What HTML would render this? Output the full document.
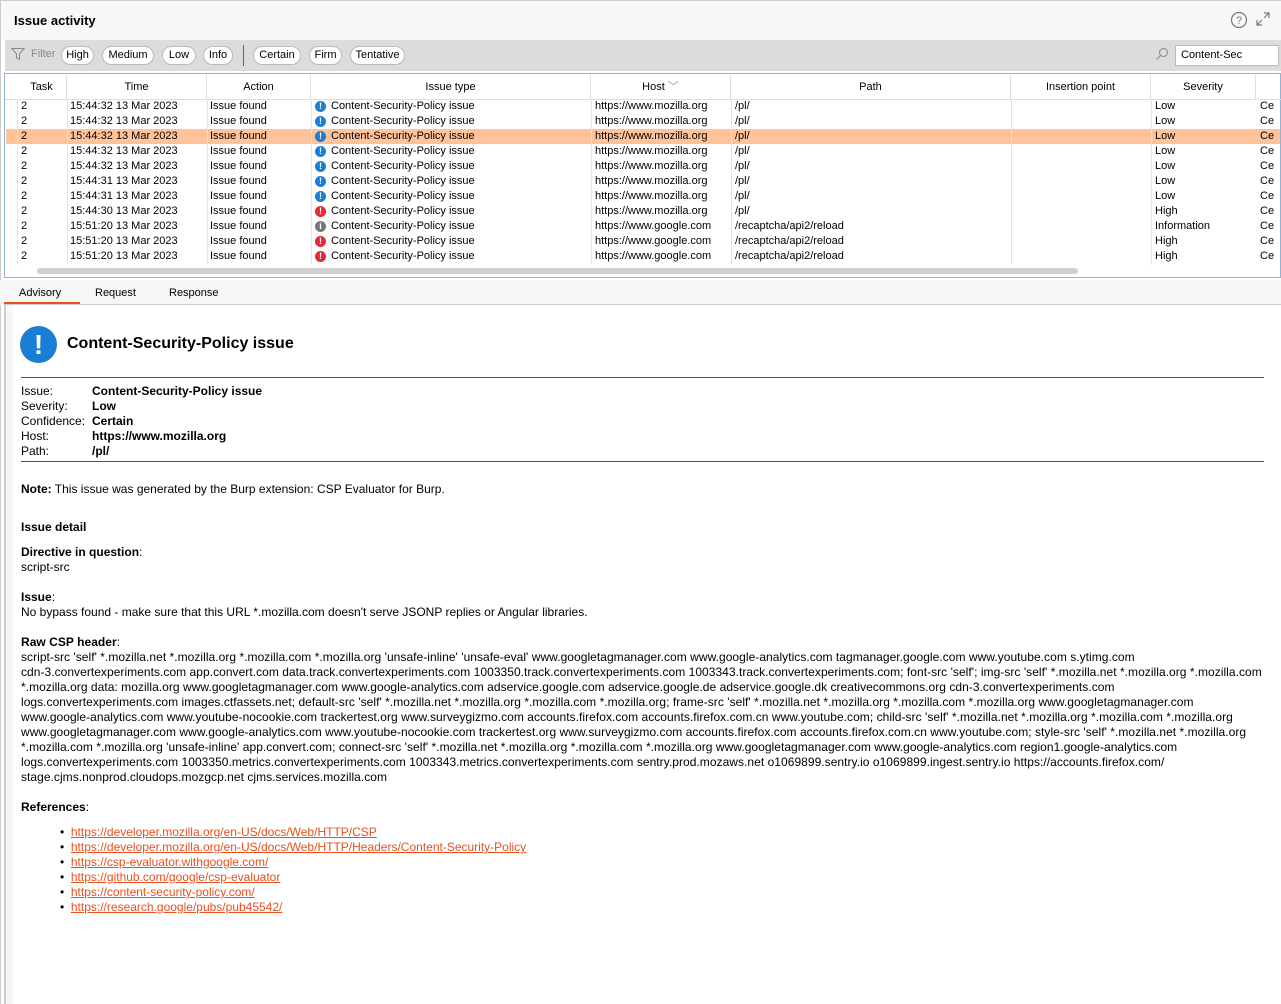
<!DOCTYPE html>
<html><head><meta charset="utf-8"><style>
*{margin:0;padding:0;box-sizing:border-box}
body{width:1281px;height:1004px;background:#fff;font-family:"Liberation Sans",Arial,sans-serif;color:#000;position:relative;overflow:hidden}
.a{position:absolute;white-space:nowrap}
.pill{position:absolute;top:46px;height:19px;border:1px solid #bbb;border-radius:10px;background:#fff;font-size:11px;line-height:17px;text-align:center}
.hd{position:absolute;top:75px;height:24px;font-size:11px;line-height:24px;text-align:center;border-right:1px solid #ddd}
.row{position:absolute;left:6px;width:1275px;height:15px;font-size:11px;line-height:15px}
.row span{position:absolute;top:0}
.ic{display:inline-block;font-style:normal;width:11px;height:11px;border-radius:50%;color:#fff;font-weight:bold;font-size:9px;line-height:11px;text-align:center;position:absolute;top:2px}
.c{font-size:12px;line-height:15px}
.c a{color:#e8501e;text-decoration:underline}
</style></head><body>
<div class="a" style="left:0;top:0;width:1281px;height:1px;background:#ccc"></div>
<div class="a" style="left:0;top:0;width:1px;height:1004px;background:#ccc"></div>
<div class="a" style="left:1px;top:1px;width:1280px;height:39px;background:#f8f8f8"></div>
<div class="a" style="left:14px;top:13px;font-size:13px;font-weight:bold">Issue activity</div>
<svg class="a" style="left:1230px;top:11px" width="18" height="18" viewBox="0 0 18 18"><circle cx="9" cy="9" r="7.5" fill="none" stroke="#777" stroke-width="1.2"/><text x="9" y="13" font-size="11" text-anchor="middle" fill="#777" font-family="Liberation Sans">?</text></svg>
<svg class="a" style="left:1255px;top:11px" width="16" height="16" viewBox="0 0 16 16" fill="none" stroke="#777" stroke-width="1.2"><path d="M9 2h5v5M14 2l-5 5M7 14H2V9M2 14l5-5"/></svg>
<div class="a" style="left:5px;top:40px;width:1276px;height:31px;background:#dcdcdc"></div>
<svg class="a" style="left:11px;top:47px" width="14" height="14" viewBox="0 0 14 14"><path d="M1 1.5h12L8.5 7v5.5L5.5 11V7z" fill="none" stroke="#888"/></svg>
<div class="a" style="left:31px;top:48px;font-size:11px;color:#888">Filter</div>
<div class="pill" style="left:61px;width:33px">High</div>
<div class="pill" style="left:102px;width:52px">Medium</div>
<div class="pill" style="left:162px;width:34px">Low</div>
<div class="pill" style="left:203px;width:30px">Info</div>
<div class="a" style="left:243px;top:45px;width:1px;height:21px;background:#666"></div>
<div class="pill" style="left:253px;width:48px">Certain</div>
<div class="pill" style="left:309px;width:33px">Firm</div>
<div class="pill" style="left:350px;width:55px">Tentative</div>
<svg class="a" style="left:1155px;top:47px" width="14" height="14" viewBox="0 0 14 14" fill="none" stroke="#888"><circle cx="8.5" cy="5.5" r="4"/><path d="M5.5 8.5L1.5 12.5"/></svg>
<div class="a" style="left:1175px;top:45px;width:104px;height:21px;background:#fff;border:1px solid #bbb;font-size:11px;line-height:19px;padding-left:5px">Content-Sec</div>
<div class="a" style="left:4px;top:73px;width:1277px;height:205px;border:1px solid #8db4dc;background:#fff;overflow:hidden">
<div id="rows"></div>
</div>
<div class="a" style="left:5px;top:99px;width:1276px;height:1px;background:#ddd"></div>
<div class="hd" style="left:17px;width:50px">Task</div>
<div class="hd" style="left:67px;width:140px">Time</div>
<div class="hd" style="left:207px;width:104px">Action</div>
<div class="hd" style="left:311px;width:280px">Issue type</div>
<div class="hd" style="left:591px;width:140px">Host <span style="color:#999">﹀</span></div>
<div class="hd" style="left:731px;width:280px">Path</div>
<div class="hd" style="left:1011px;width:140px">Insertion point</div>
<div class="hd" style="left:1151px;width:105px">Severity</div>
<div class="a" style="left:17px;top:99px;width:1px;height:168px;background:#e4e4e4"></div>
<div class="a" style="left:67px;top:99px;width:1px;height:168px;background:#e4e4e4"></div>
<div class="a" style="left:207px;top:99px;width:1px;height:168px;background:#e4e4e4"></div>
<div class="a" style="left:311px;top:99px;width:1px;height:168px;background:#e4e4e4"></div>
<div class="a" style="left:591px;top:99px;width:1px;height:168px;background:#e4e4e4"></div>
<div class="a" style="left:731px;top:99px;width:1px;height:168px;background:#e4e4e4"></div>
<div class="a" style="left:1011px;top:99px;width:1px;height:168px;background:#e4e4e4"></div>
<div class="a" style="left:1151px;top:99px;width:1px;height:168px;background:#e4e4e4"></div>
<script>
var R=[["15:44:32","b","www.mozilla.org","/pl/","Low"],["15:44:32","b","www.mozilla.org","/pl/","Low"],["15:44:32","b","www.mozilla.org","/pl/","Low",1],["15:44:32","b","www.mozilla.org","/pl/","Low"],["15:44:32","b","www.mozilla.org","/pl/","Low"],["15:44:31","b","www.mozilla.org","/pl/","Low"],["15:44:31","b","www.mozilla.org","/pl/","Low"],["15:44:30","r","www.mozilla.org","/pl/","High"],["15:51:20","g","www.google.com","/recaptcha/api2/reload","Information"],["15:51:20","r","www.google.com","/recaptcha/api2/reload","High"],["15:51:20","r","www.google.com","/recaptcha/api2/reload","High"],["15:44:30","b","www.mozilla.org","/recaptcha/api2/reload","Low"]];
var col={b:"#1a7fd4",r:"#e02a3a",g:"#777"};var h="";
R.forEach(function(r,i){h+='<div class="row" style="left:1px;top:'+(25+i*15)+'px;'+(r[5]?'background:#ffc299':'')+'"><span style="left:15px">2</span><span style="left:64px">'+r[0]+' 13 Mar 2023</span><span style="left:204px">Issue found</span><i class="ic" style="left:309px;background:'+col[r[1]]+'">'+(r[1]=="g"?"i":"!")+'</i><span style="left:325px">Content-Security-Policy issue</span><span style="left:589px">https://'+r[2]+'</span><span style="left:729px">'+r[3]+'</span><span style="left:1149px">'+r[4]+'</span><span style="left:1254px">Ce</span></div>';});
document.getElementById("rows").innerHTML=h;
</script>
<div class="a" style="left:5px;top:265px;width:1275px;height:12px;background:#fff"></div>
<div class="a" style="left:37px;top:268px;width:1041px;height:6px;border-radius:3px;background:#d0d0d0"></div>
<div class="a" style="left:0;top:280px;width:1281px;height:25px;background:#f6f6f6"></div>
<div class="a" style="left:19px;top:287px;font-size:11px">Advisory</div>
<div class="a" style="left:95px;top:287px;font-size:11px">Request</div>
<div class="a" style="left:169px;top:287px;font-size:11px">Response</div>
<div class="a" style="left:4px;top:302px;width:76px;height:2px;background:#e8501e"></div>
<div class="a" style="left:4px;top:304px;width:1277px;height:1px;background:#ccc"></div>
<div class="a" style="left:4px;top:305px;width:2px;height:699px;background:#ccc"></div>
<div class="a" style="left:6px;top:305px;width:7px;height:699px;background:#f6f6f6"></div>
<div class="a" style="left:20px;top:326px;width:37px;height:37px;border-radius:50%;background:#1a7fd4;color:#fff;font-weight:bold;font-size:28px;line-height:37px;text-align:center">!</div>
<div class="a" style="left:67px;top:335px;font-size:16px;font-weight:bold">Content-Security-Policy issue</div>
<div class="a" style="left:21px;top:377px;width:1243px;height:1px;background:#555"></div>
<div class="a c" style="left:21px;top:384px">Issue:<br>Severity:<br>Confidence:<br>Host:<br>Path:</div>
<div class="a c" style="left:92px;top:384px;font-weight:bold">Content-Security-Policy issue<br>Low<br>Certain<br>https://www.mozilla.org<br>/pl/</div>
<div class="a" style="left:21px;top:461px;width:1243px;height:1px;background:#555"></div>
<div class="a c" style="left:21px;top:482px"><b>Note:</b> This issue was generated by the Burp extension: CSP Evaluator for Burp.</div>
<div class="a c" style="left:21px;top:520px"><b>Issue detail</b></div>
<div class="a c" style="left:21px;top:545px"><b>Directive in question</b>:<br>script-src</div>
<div class="a c" style="left:21px;top:590px"><b>Issue</b>:<br>No bypass found - make sure that this URL *.mozilla.com doesn't serve JSONP replies or Angular libraries.</div>
<div class="a c" style="left:21px;top:635px;letter-spacing:0.04px"><b>Raw CSP header</b>:<br>script-src 'self' *.mozilla.net *.mozilla.org *.mozilla.com *.mozilla.org 'unsafe-inline' 'unsafe-eval' www.googletagmanager.com www.google-analytics.com tagmanager.google.com www.youtube.com s.ytimg.com<br>cdn-3.convertexperiments.com app.convert.com data.track.convertexperiments.com 1003350.track.convertexperiments.com 1003343.track.convertexperiments.com; font-src 'self'; img-src 'self' *.mozilla.net *.mozilla.org *.mozilla.com<br>*.mozilla.org data: mozilla.org www.googletagmanager.com www.google-analytics.com adservice.google.com adservice.google.de adservice.google.dk creativecommons.org cdn-3.convertexperiments.com<br>logs.convertexperiments.com images.ctfassets.net; default-src 'self' *.mozilla.net *.mozilla.org *.mozilla.com *.mozilla.org; frame-src 'self' *.mozilla.net *.mozilla.org *.mozilla.com *.mozilla.org www.googletagmanager.com<br>www.google-analytics.com www.youtube-nocookie.com trackertest.org www.surveygizmo.com accounts.firefox.com accounts.firefox.com.cn www.youtube.com; child-src 'self' *.mozilla.net *.mozilla.org *.mozilla.com *.mozilla.org<br>www.googletagmanager.com www.google-analytics.com www.youtube-nocookie.com trackertest.org www.surveygizmo.com accounts.firefox.com accounts.firefox.com.cn www.youtube.com; style-src 'self' *.mozilla.net *.mozilla.org<br>*.mozilla.com *.mozilla.org 'unsafe-inline' app.convert.com; connect-src 'self' *.mozilla.net *.mozilla.org *.mozilla.com *.mozilla.org www.googletagmanager.com www.google-analytics.com region1.google-analytics.com<br>logs.convertexperiments.com 1003350.metrics.convertexperiments.com 1003343.metrics.convertexperiments.com sentry.prod.mozaws.net o1069899.sentry.io o1069899.ingest.sentry.io https://accounts.firefox.com/<br>stage.cjms.nonprod.cloudops.mozgcp.net cjms.services.mozilla.com</div>
<div class="a c" style="left:21px;top:800px"><b>References</b>:</div>
<div class="a c" style="left:60px;top:825px;line-height:15px">
<div>•&nbsp; <a>https://developer.mozilla.org/en-US/docs/Web/HTTP/CSP</a></div>
<div>•&nbsp; <a>https://developer.mozilla.org/en-US/docs/Web/HTTP/Headers/Content-Security-Policy</a></div>
<div>•&nbsp; <a>https://csp-evaluator.withgoogle.com/</a></div>
<div>•&nbsp; <a>https://github.com/google/csp-evaluator</a></div>
<div>•&nbsp; <a>https://content-security-policy.com/</a></div>
<div>•&nbsp; <a>https://research.google/pubs/pub45542/</a></div>
</div>
</body></html>
